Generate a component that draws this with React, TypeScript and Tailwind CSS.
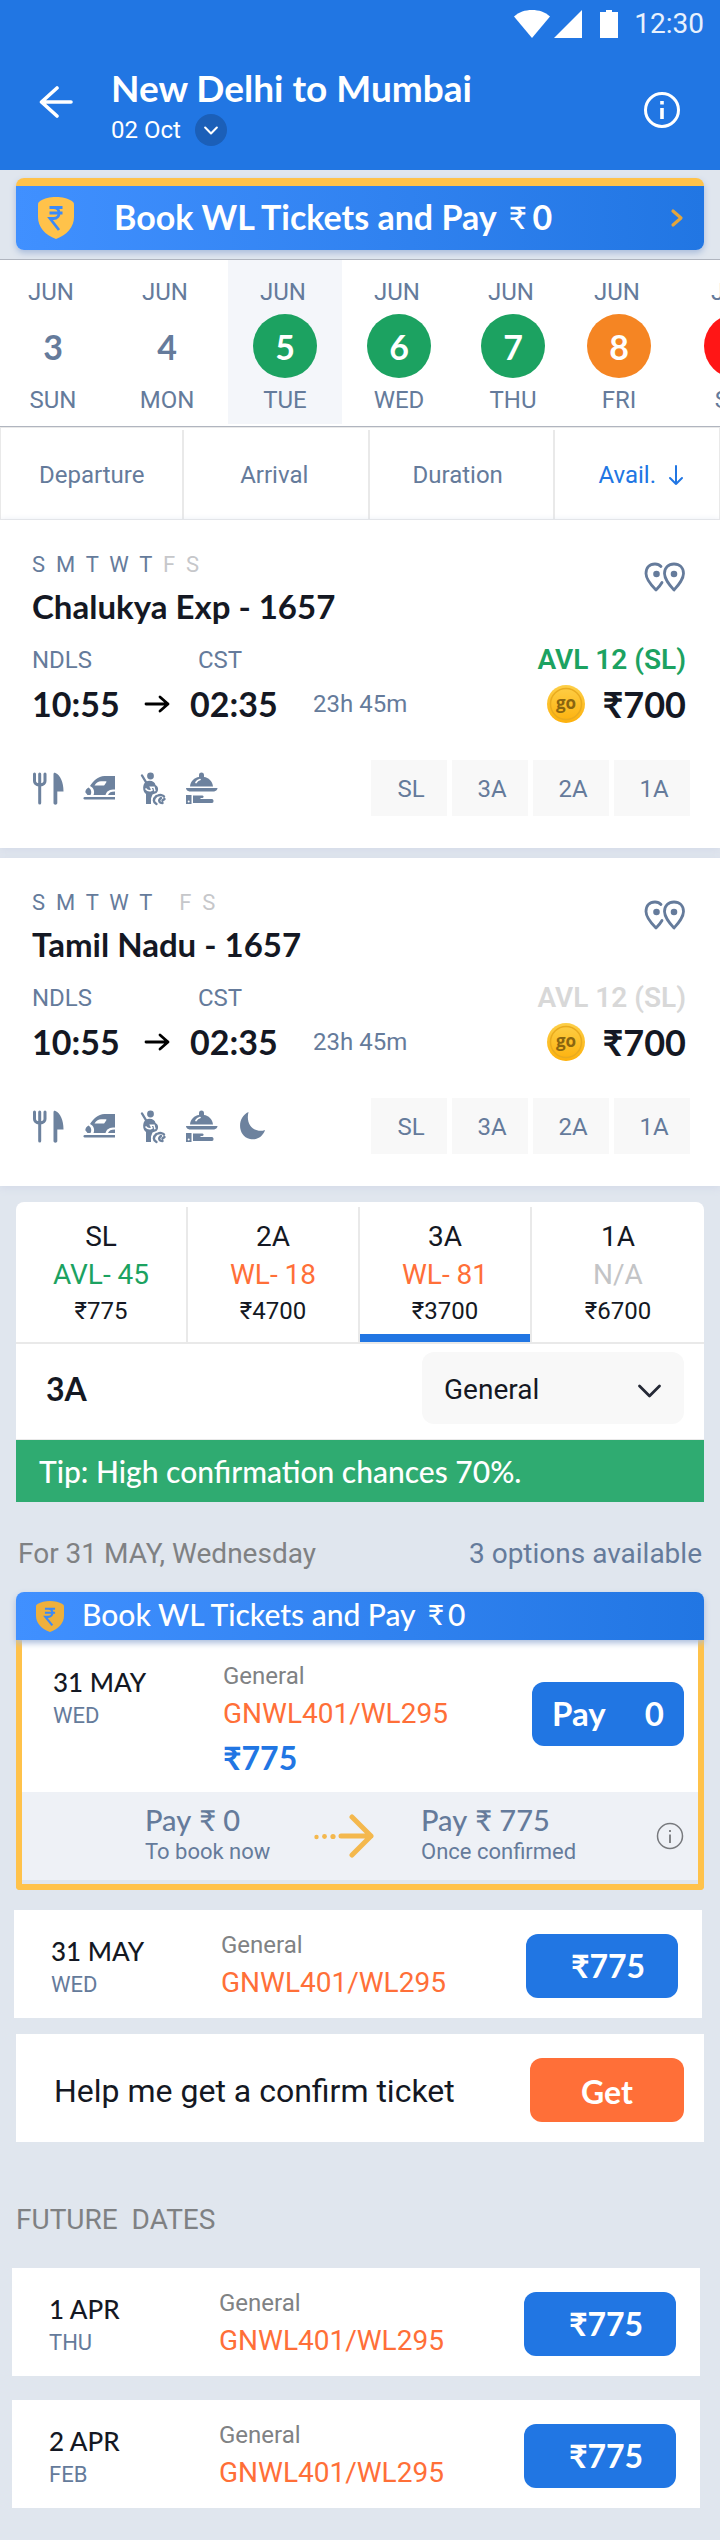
import React from "react";

const display = "font-['Lato','Noto_Sans',sans-serif]";

/* ---------- icons ---------- */

function WifiIcon() {
  return (
    <svg width="36" height="28" viewBox="0 0 36 28" fill="#fff" aria-hidden="true">
      <path d="M18 28 0 6.500C5 2 11 0 18 0s13 2 18 6.500Z" />
    </svg>
  );
}

function SignalIcon() {
  return (
    <svg width="28" height="28" viewBox="0 0 28 28" fill="#fff" aria-hidden="true">
      <path d="M28 0v28H0Z" />
    </svg>
  );
}

function BatteryIcon() {
  return (
    <svg width="18" height="28" viewBox="0 0 18 28" fill="#fff" aria-hidden="true">
      <path d="M6 0h6v2h6v26H0V2h6Z" />
    </svg>
  );
}

function BackIcon() {
  return (
    <svg width="34" height="34" viewBox="0 0 34 34" fill="none" stroke="#fff" strokeWidth="3.600" strokeLinecap="round" strokeLinejoin="round" aria-hidden="true">
      <path d="M18 3 2.500 17 18 31M3 17h29" />
    </svg>
  );
}

function InfoIcon({ thin = false }: { thin?: boolean }) {
  return thin ? (
    <svg width="28" height="28" viewBox="0 0 28 28" fill="none" stroke="#77797d" strokeWidth="1.500" aria-hidden="true">
      <circle cx="14" cy="14" r="12.500" />
      <path d="M14 12.500v8.500M14 8v2" strokeWidth="1.800" />
    </svg>
  ) : (
    <svg width="38" height="38" viewBox="0 0 38 38" fill="none" stroke="#fff" strokeWidth="3" aria-hidden="true">
      <circle cx="19" cy="19" r="16.500" />
      <path d="M19 17v11M19 10v3.600" strokeWidth="3.600" />
    </svg>
  );
}

function ShieldIcon({ small = false }: { small?: boolean }) {
  return (
    <svg width={small ? 28 : 36} height={small ? 31 : 42} viewBox="0 0 36 42" preserveAspectRatio="none" aria-hidden="true">
      <path d="M18 0c6 0 12 1.500 15.500 3.800C35.500 5 36 6 36 8v12c0 10-7 18-18 22C7 38 0 30 0 20V8c0-2 .5-3 2.500-4.200C6 1.500 12 0 18 0Z" fill={small ? "#eeb03c" : "#ffc24a"} />
      <path d="M11.500 10.500h13M11.500 16h13M11.500 10.500h4c7.500 0 7.500 11 0 11h-3.500L21 33" fill="none" stroke="#3b8af8" strokeWidth="2.800" />
    </svg>
  );
}

function RouteIcon() {
  return (
    <svg width="42" height="30" viewBox="0 0 42 30" fill="none" stroke="#657b9b" strokeWidth="2.800" strokeLinecap="round" strokeLinejoin="round" aria-hidden="true">
      <path d="M30 28c-4.500-5-9.500-10.500-9.500-16.500C20.500 5.500 24.500 2 30 2s9.500 3.500 9.500 9.500C39.500 17.500 34.500 23 30 28Z" />
      <path d="M17 4.500C15.500 2.800 13.500 2 11 2 5.500 2 2 5.500 2 11.500 2 17.500 7 23 12 28c2.500-2.500 4.500-4.800 6-7.500" />
      <circle cx="30" cy="12" r="1.900" fill="#657b9b" />
      <circle cx="12.500" cy="12" r="1.900" fill="#657b9b" />
    </svg>
  );
}

function CoinIcon() {
  return (
    <svg width="38" height="40" viewBox="0 0 38 40" aria-hidden="true">
      <defs>
        <linearGradient id="coin" x1="0" y1="0" x2="0" y2="1">
          <stop offset="0" stopColor="#fdcf48" />
          <stop offset="1" stopColor="#fdb10c" />
        </linearGradient>
      </defs>
      <circle cx="19" cy="20" r="19" fill="url(#coin)" />
      <circle cx="19" cy="20" r="15.500" fill="none" stroke="#e9ab1f" strokeWidth="1.500" />
      <text x="19" y="25" textAnchor="middle" fontFamily="Open Sans, sans-serif" fontWeight="700" fontSize="17" fill="#8a6510">go</text>
    </svg>
  );
}

function AmenityIcon({ kind }: { kind: string }) {
  const c = "#6d829e";
  return (
    <svg width="34" height="34" viewBox="0 0 34 34" fill={c} aria-hidden="true">
      {kind === "meal" && (
        <>
          <path d="M2.500 2v7c0 2.500 2 3.800 5.200 4.200 3.300-.4 5.300-1.700 5.300-4.200V2M7.700 2v29" fill="none" stroke={c} strokeWidth="3" strokeLinecap="round" />
          <path d="M21.500 2.500C21.500 1 22 .5 23.500 1c5 2.500 8 9 8 18.500h-6.200V31c0 2.200-3.800 2.200-3.800 0Z" />
        </>
      )}
      {kind === "train" && (
        <>
          <path d="M32 4v13.500c-5.500 0-8 1.200-9.500 5.500H10.500c1.600-3.500 0-7.500-3.500-9C10 9.500 15 4 21.500 4Z" />
          <path d="M11.500 13.500c2-3 4-4.300 6.500-4.300h4.800c.8 0 .8.6.2 1.500l-1.500 2.300c-.3.400-.6.500-1 .5Z" fill="#fff" />
          <path d="M5.500 15.500c-2 1-3.200 3-3.200 4.800L4.500 23h3c1.500-2.500.7-6-2-7.500ZM32 19.500c-4 0-6 1-7 3.500h7ZM1.500 25h30.500v2.500H1.500C0 27.500 0 25 1.500 25Z" />
        </>
      )}
      {kind === "family" && (
        <>
          <circle cx="16.500" cy="4" r="3.400" />
          <path d="m8 3.500 4.500 7.500" fill="none" stroke={c} strokeWidth="2.400" strokeLinecap="round" />
          <path d="M12 9.500c5-2 9 .5 9.500 3.500 3 1.500 3.500 5.500 1 8l-4 1.500-1.500 4V32h-5V22C8 19 8.500 12 12 9.500Z" />
          <path d="M11.500 16.500c2 2.500 4 3 6.500 1.500l-1.500-2.800h3.500l1 4" fill="none" stroke="#fff" strokeWidth="1.500" />
          <path d="M22.500 32c-3.500-2-3.500-5 0-8M28.500 31c-3.500 0-4.500-3-1.500-5m1.500 2.500 2-1.500M24 23.500c2-1 5-.5 6 1" fill="none" stroke={c} strokeWidth="2.400" strokeLinecap="round" />
        </>
      )}
      {kind === "dish" && (
        <>
          <path d="M5 14.500C5.500 9 9.500 5.500 14 5V3c0-3.300 5-3.300 5 0v2c4.500.5 8.500 4 9 9.500Z" />
          <path d="M11 10.500c1-1.800 2.200-2.500 4-3" fill="none" stroke="#fff" strokeWidth="1.700" strokeLinecap="round" />
          <path d="M1 16h31.500c0 2.500-2.500 3.600-5 3.600H6c-2.500 0-5-1.100-5-3.600ZM1 23h5.500v9H1ZM8 23.500h9.500c1.500 0 1.500 2.500 0 2.500h-2v1h11.500c2 0 2 4 0 4H8Z" />
          <circle cx="3.700" cy="29.500" r="1" fill="#fff" />
        </>
      )}
      {kind === "moon" && <path d="M12.500 2C1 7 1 26 14 29c7 1.500 13-2.500 15-9-9 3.500-20-4-16.500-18Z" />}
    </svg>
  );
}

function PayArrowIcon() {
  return (
    <svg width="60" height="44" viewBox="0 0 60 44" fill="none" stroke="#f4b84d" strokeWidth="5" strokeLinecap="round" strokeLinejoin="round" aria-hidden="true">
      <path d="M27 22h30M38 3l19 19-19 19" />
      <g fill="#f4b84d" stroke="none">
        <circle cx="2.500" cy="23" r="2.200" />
        <circle cx="10.500" cy="22.500" r="2.400" />
        <circle cx="19" cy="22.500" r="2.600" />
      </g>
    </svg>
  );
}

function Chevron({ color, width, height, stroke }: { color: string; width: number; height: number; stroke: number }) {
  return (
    <svg width={width} height={height} viewBox="0 0 24 14" fill="none" stroke={color} strokeWidth={stroke} strokeLinecap="round" strokeLinejoin="round" aria-hidden="true">
      <path d="m2 2 10 10L22 2" />
    </svg>
  );
}

/* ---------- data ---------- */

const dates = [
  { day: "3", name: "SUN", cell: "w-[106px]", dot: "text-[#657b9b]" },
  { day: "4", name: "MON", cell: "w-[122px]", dot: "text-[#657b9b]" },
  { day: "5", name: "TUE", cell: "w-[114px] bg-[#f4f6fa]", dot: "bg-[#1ca261] text-white" },
  { day: "6", name: "WED", cell: "w-[114px]", dot: "bg-[#1ca261] text-white" },
  { day: "7", name: "THU", cell: "w-[114px]", dot: "bg-[#1ca261] text-white" },
  { day: "8", name: "FRI", cell: "w-[98px]", dot: "bg-[#f58523] text-white" },
  { day: "9", name: "SAT", cell: "w-[136px]", dot: "bg-[#ff1616] text-white" },
];

const classes = [
  { name: "SL", status: "AVL- 45", tone: "text-[#1ca261]", price: "₹775" },
  { name: "2A", status: "WL- 18", tone: "text-[#ff6f38]", price: "₹4700" },
  { name: "3A", status: "WL- 81", tone: "text-[#ff6f38]", price: "₹3700", active: true },
  { name: "1A", status: "N/A", tone: "text-[#c3c4c6]", price: "₹6700" },
];

/* ---------- sections ---------- */

function TrainCard({ title, off, status, statusTone, amenities }: { title: string; off: string; status: string; statusTone: string; amenities: string[] }) {
  return (
    <article className="bg-white pt-8 pr-[30px] pb-8 pl-8 shadow-[0_2px_8px_#d3d9e8]">
      <div className="flex justify-between pr-1">
        <div>
          <p className="whitespace-pre text-[22px] leading-[26px] text-[#657b9b]">
            {"S  M  T  W  T"}
            <span className="text-[#c6c7ca]">{off}</span>
          </p>
          <h2 className={`${display} mt-[10px] text-[33px] leading-9 font-bold`}>{title}</h2>
        </div>
        <button aria-label="Show route" className="mt-[10px] self-start">
          <RouteIcon />
        </button>
      </div>
      <div className="mt-[22px] flex justify-between pr-1">
        <div className="grid grid-cols-[112px_46px_123px_auto] items-center gap-y-[10px] text-[24px] text-[#657b9b]">
          <span className="leading-7">NDLS</span>
          <span className="col-span-3 pl-[54px] leading-7">CST</span>
          <span className={`${display} text-[34px] leading-10 font-bold text-[#141823]`}>10:55</span>
          <svg width="26" height="18" viewBox="0 0 26 18" fill="none" stroke="#000" strokeWidth="2.800" strokeLinecap="round" strokeLinejoin="round" aria-hidden="true">
            <path d="M2 9h22M16 2l8 7-8 7" />
          </svg>
          <span className={`${display} text-[34px] leading-10 font-bold text-[#141823]`}>02:35</span>
          <span className="leading-7">23h 45m</span>
        </div>
        <div className="flex flex-col items-end gap-[10px]">
          <span className={`text-[28px] leading-7 font-semibold ${statusTone}`}>{status}</span>
          <span className="flex items-center gap-[18px]">
            <CoinIcon />
            <span className={`${display} text-[36px] leading-10 font-bold`}>₹700</span>
          </span>
        </div>
      </div>
      <div className="mt-9 flex items-center justify-between">
        <div className="flex gap-[17px] pt-[2px]">
          {amenities.map((a) => (
            <AmenityIcon key={a} kind={a} />
          ))}
        </div>
        <div className="flex gap-[5px]">
          {["SL", "3A", "2A", "1A"].map((c) => (
            <button key={c} className="h-14 w-19 bg-[#f8f8f8] pt-[2px] pl-1 text-[24px] text-[#657b9b]">
              {c}
            </button>
          ))}
        </div>
      </div>
    </article>
  );
}

function FareInfo({ date, day, price }: { date: string; day: string; price?: string }) {
  return (
    <div className="flex flex-1">
      <div className="w-[170px] pt-1">
        <p className={`${display} text-[26px] leading-9 font-medium`}>{date}</p>
        <p className="text-[22px] leading-8 text-[#657b9b]">{day}</p>
      </div>
      <div>
        <p className="text-[24px] leading-8 text-[#808284]">General</p>
        <p className="mt-1 text-[28px] leading-9 text-[#ff6f38]">GNWL401/WL295</p>
        {price && <p className={`${display} mt-[6px] text-[32px] leading-10 font-bold text-[#2176e3]`}>{price}</p>}
      </div>
    </div>
  );
}

function FareRow({ date, day }: { date: string; day: string }) {
  return (
    <div className="flex min-h-27 items-start bg-white pr-6 pl-[37px]">
      <div className="flex flex-1 pt-[19px]">
        <FareInfo date={date} day={day} />
      </div>
      <button className={`${display} mt-6 h-16 w-38 rounded-xl bg-[#2176e3] pl-3 text-[32px] font-bold text-white`}>₹775</button>
    </div>
  );
}

export default function App() {
  return (
    <div className="min-h-screen overflow-hidden bg-[#e0e6ee] pb-8 font-['Roboto','Noto_Sans',sans-serif] text-[#141823]">
      <header className="h-[170px] bg-[#2176e3] text-white">
        <div className="flex items-center justify-end pt-2 pr-4 text-[28px] leading-8">
          <WifiIcon />
          <span className="ml-1">
            <SignalIcon />
          </span>
          <span className="ml-[18px]">
            <BatteryIcon />
          </span>
          <span className="ml-4 text-[#e8f1fd]">12:30</span>
        </div>
        <div className="flex items-center pt-7 pr-[39px] pl-[39px]">
          <button aria-label="Back" className="pb-[10px]">
            <BackIcon />
          </button>
          <div className="ml-[38px] flex-1">
            <h1 className={`${display} text-[37px] leading-10 font-bold`}>New Delhi to Mumbai</h1>
            <button className="flex items-center gap-[14px] pt-[6px] text-[24px] leading-8">
              02 Oct
              <span className="flex size-8 items-center justify-center rounded-full bg-[#1b5fb8]">
                <Chevron color="#fff" width={14} height={9} stroke={3.5} />
              </span>
            </button>
          </div>
          <button aria-label="Information" className="pt-[6px]">
            <InfoIcon />
          </button>
        </div>
      </header>

      <div className="px-4 pt-2 pb-[9px]">
        <a href="#book" className="flex h-18 items-center overflow-hidden rounded-lg border-t-8 border-[#ffc24a] bg-linear-to-r from-[#4090ff] to-[#2176e3] pr-5 pl-[22px] shadow-[0_3px_6px_#a9bcdc]">
          <ShieldIcon />
          <span className={`${display} ml-10 flex flex-1 items-center pb-[2px] text-[34px] leading-10 font-bold text-white`}>
            Book WL Tickets and Pay
            <span className="ml-3 text-[31px] font-medium">₹</span>
            <span className="ml-[6px]">0</span>
          </span>
          <svg width="14" height="20" viewBox="0 0 14 20" fill="none" stroke="#e3a53c" strokeWidth="3.200" strokeLinecap="round" strokeLinejoin="round" aria-hidden="true">
            <path d="m3 3 8 7-8 7" />
          </svg>
        </a>
      </div>

      <div className="flex h-[168px] overflow-hidden border-y border-[#b0b5bf] bg-white pb-[2px] text-[24px] text-[#657b9b]">
        {dates.map((d) => (
          <button key={d.day} className={`flex shrink-0 flex-col items-center pt-4 ${d.cell}`}>
            <span className="pr-1 leading-8">JUN</span>
            <span className={`${display} mt-[6px] flex size-16 items-center justify-center rounded-full text-[34px] font-bold ${d.dot}`}>{d.day}</span>
            <span className="mt-[6px] leading-8">{d.name}</span>
          </button>
        ))}
      </div>

      <div className="grid h-[93px] grid-cols-[184fr_186fr_186fr_164fr] divide-x-2 divide-[#e9e9e9] border border-[#e9e9e9] bg-white pt-[2px] text-[24px] text-[#657b9b]">
        <button>Departure</button>
        <button className="pr-1">Arrival</button>
        <button className="pr-2">Duration</button>
        <button className="flex items-center justify-center gap-3 pl-2 text-[#2176e3]">
          Avail.
          <svg width="16" height="22" viewBox="0 0 16 22" fill="none" stroke="#2176e3" strokeWidth="2" strokeLinecap="round" strokeLinejoin="round" aria-hidden="true">
            <path d="M8 2v18M2 14l6 6 6-6" />
          </svg>
        </button>
      </div>

      <main>
        <div className="flex flex-col gap-[10px]">
          <TrainCard title="Chalukya Exp - 1657" off="  F  S" status="AVL 12 (SL)" statusTone="text-[#1ca261]" amenities={["meal", "train", "family", "dish"]} />
          <TrainCard title="Tamil Nadu - 1657" off="     F  S" status="AVL 12 (SL)" statusTone="text-[#d8d8d8]" amenities={["meal", "train", "family", "dish", "moon"]} />
        </div>

        <div className="px-4 pt-4">
          <section className="overflow-hidden rounded-t-lg bg-white">
            <div className="grid grid-cols-4 border-b-2 border-[#e9e9e9] pt-[5px]">
              {classes.map((c) => (
                <button key={c.name} className={`flex h-[135px] flex-col items-center border-r-2 border-[#e9e9e9] pt-3 last:border-r-0 ${c.active ? "relative" : ""}`}>
                  <span className="text-[28px] leading-9">{c.name}</span>
                  <span className={`text-[28px] leading-10 ${c.tone}`}>{c.status}</span>
                  <span className="text-[24px] leading-8">{c.price}</span>
                  {c.active && <span className="absolute inset-x-0 bottom-0 h-2 bg-[#2176e3]" />}
                </button>
              ))}
            </div>
            <div className="flex h-24 items-start justify-between border-b border-[#e9e9e9] pt-2 pr-5 pl-[30px]">
              <label htmlFor="quota" className={`${display} text-[32px] leading-[74px] font-bold`}>
                3A
              </label>
              <div className="relative">
                <select id="quota" className="h-18 w-[262px] appearance-none rounded-xl bg-[#f8f8f8] pt-1 pl-[22px] text-[28px]">
                  <option>General</option>
                </select>
                <span className="pointer-events-none absolute top-8 right-[22px]">
                  <Chevron color="#252936" width={25} height={14} stroke={2.8} />
                </span>
              </div>
            </div>
            <p className={`${display} bg-[#2fab71] px-[23px] text-[30px] leading-[62px] font-medium text-white`}>Tip: High confirmation chances 70%.</p>
          </section>

          <div className="flex justify-between pt-8 pr-[2px] pl-[2px] text-[28px] leading-10">
            <p className="text-[#7f8183]">For 31 MAY, Wednesday</p>
            <p className="text-[#657b9b]">3 options available</p>
          </div>

          <section id="book" className="mt-[18px]">
            <div className="relative flex h-12 items-center rounded-t-lg bg-linear-to-r from-[#4090ff] to-[#2176e3] pl-5 shadow-[0_3px_6px_#a9bcdc]">
              <ShieldIcon small />
              <span className={`${display} ml-[18px] flex items-center pb-1 text-[30px] leading-9 font-medium text-white`}>
                Book WL Tickets and Pay
                <span className="ml-3 text-[28px]">₹</span>
                <span className="ml-1">0</span>
              </span>
            </div>
            <div className="rounded-b-sm border-x-6 border-b-6 border-[#ffc24a]">
              <div className="flex h-38 items-start bg-white pt-[18px] pr-[14px] pl-[31px]">
                <div className="flex flex-1 pt-[2px]">
                  <FareInfo date="31 MAY" day="WED" price="₹775" />
                </div>
                <button className={`${display} mt-6 flex h-16 w-38 items-center justify-between rounded-xl bg-[#2176e3] px-5 text-[33px] font-bold text-white`}>
                  <span>Pay</span> <span>0</span>
                </button>
              </div>
              <div className="mb-1 flex h-22 items-center bg-[#eef1f6] pr-[14px] pl-[123px] text-[22px] text-[#657b9b]">
                <div className="w-[169px]">
                  <p className={`${display} flex gap-2 text-[29px] leading-8 font-medium`}>
                    Pay <span>₹ 0</span>
                  </p>
                  <p className="leading-8">To book now</p>
                </div>
                <div className="w-[107px] shrink-0">
                  <PayArrowIcon />
                </div>
                <div className="flex-1">
                  <p className={`${display} flex gap-2 text-[29px] leading-8 font-medium`}>
                    Pay <span>₹ 775</span>
                  </p>
                  <p className="leading-8">Once confirmed</p>
                </div>
                <button aria-label="Payment details">
                  <InfoIcon thin />
                </button>
              </div>
            </div>
          </section>
        </div>

        <div className="pt-5 pr-[18px] pl-[14px]">
          <FareRow date="31 MAY" day="WED" />
        </div>

        <div className="px-4 pt-4">
          <div className="flex min-h-27 items-start justify-between bg-white pt-6 pr-5 pl-[38px]">
            <p className="text-[32px] leading-[66px]">Help me get a confirm ticket</p>
            <button className={`${display} h-16 w-[154px] rounded-xl bg-[#ff6f38] pt-1 text-[32px] font-bold text-white`}>Get</button>
          </div>
        </div>

        <h3 className="px-4 pt-[58px] text-[28px] leading-10 whitespace-pre text-[#7f8183]">{"FUTURE  DATES"}</h3>

        <div className="flex flex-col gap-6 pt-7 pr-5 pl-3">
          <FareRow date="1 APR" day="THU" />
          <FareRow date="2 APR" day="FEB" />
        </div>
      </main>
    </div>
  );
}
